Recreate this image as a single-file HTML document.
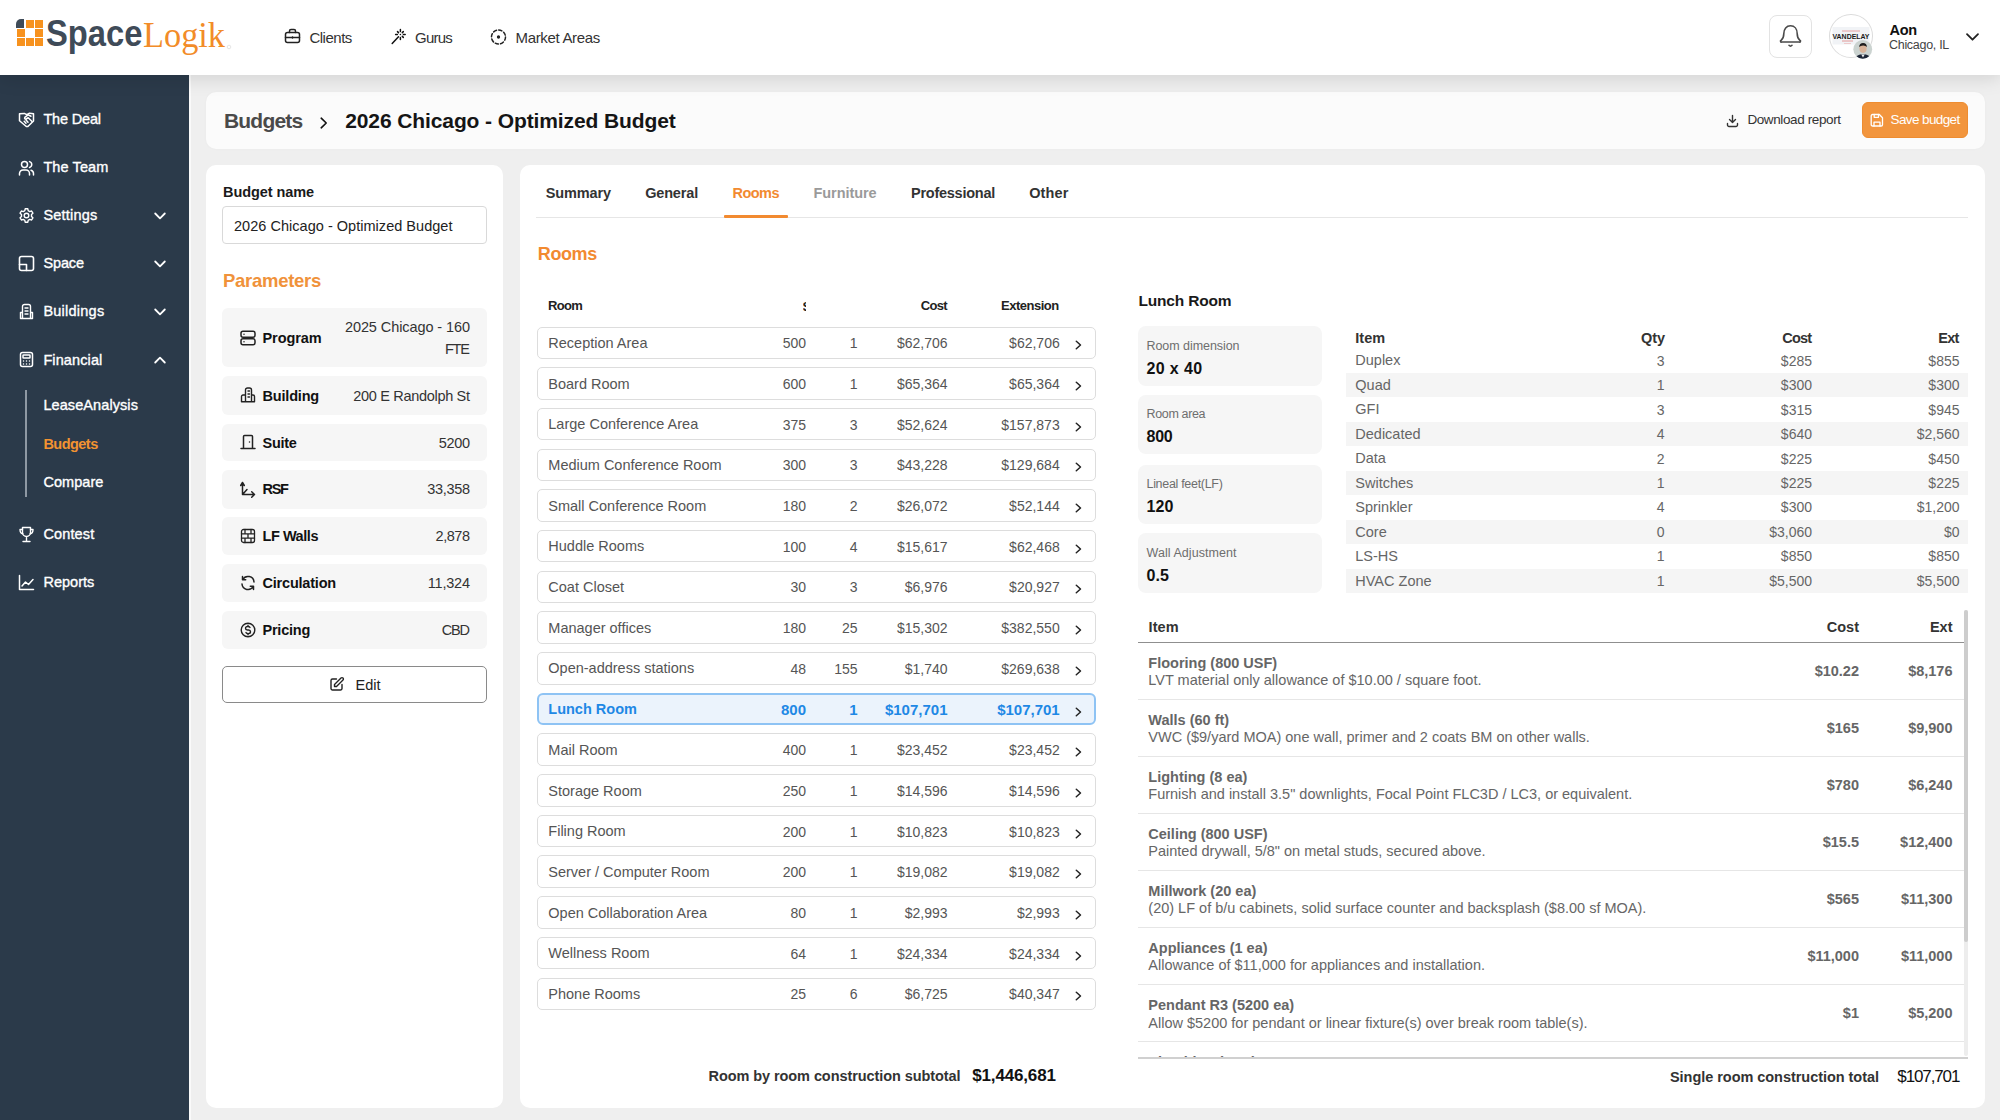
<!DOCTYPE html>
<html><head><meta charset="utf-8"><title>SpaceLogik - Budgets</title>
<style>
html,body{margin:0;padding:0;}
body{width:2000px;height:1120px;overflow:hidden;background:#EFEFEF;position:relative;font-family:"Liberation Sans",sans-serif;}
.t{position:absolute;white-space:nowrap;line-height:1;}
.b{position:absolute;box-sizing:border-box;}
svg.b{overflow:visible;}
</style></head><body>
<div class="b" style="left:0px;top:75px;width:189px;height:1045px;background:#2B3A4A;"></div>
<div class="b" style="left:189px;top:75px;width:2px;height:1045px;background:#fafafa;"></div>
<div class="b" style="left:206px;top:92px;width:1779px;height:57px;background:#fbfbfb;border-radius:10px;box-shadow:0 0 3px rgba(0,0,0,0.03);"></div>
<div class="b" style="left:206px;top:165px;width:297px;height:943px;background:#fff;border-radius:10px;"></div>
<div class="b" style="left:520px;top:165px;width:1465px;height:943px;background:#fff;border-radius:10px;"></div>
<div class="b" style="left:0px;top:0px;width:2000px;height:75px;background:#fff;box-shadow:0 3px 18px rgba(0,0,0,0.13);"></div>
<div class="b" style="left:26.1px;top:20px;width:8.100000000000001px;height:8.100000000000001px;background:#F7921E;"></div>
<div class="b" style="left:35.3px;top:20px;width:8.100000000000001px;height:8.100000000000001px;background:#F7921E;"></div>
<div class="b" style="left:16.9px;top:29.2px;width:8.100000000000001px;height:8.099999999999998px;background:#F7921E;"></div>
<div class="b" style="left:35.3px;top:29.2px;width:8.100000000000001px;height:8.099999999999998px;background:#F7921E;"></div>
<div class="b" style="left:16.9px;top:38.4px;width:8.100000000000001px;height:8.100000000000001px;background:#F7921E;"></div>
<div class="b" style="left:26.1px;top:38.4px;width:8.100000000000001px;height:8.100000000000001px;background:#F7921E;"></div>
<div class="b" style="left:35.3px;top:38.4px;width:8.100000000000001px;height:8.100000000000001px;background:#F7921E;"></div>
<div class="b" style="left:16.2px;top:19.3px;width:8.2px;height:8.599999999999998px;background:#3F4B58;border-top-left-radius:5px;"></div>
<svg class="b" style="left:0;top:0" width="260" height="75"><text x="46" y="46" font-family="Liberation Sans" font-weight="700" font-size="37" fill="#3F4B58" textLength="96.5" lengthAdjust="spacingAndGlyphs">Space</text><text x="143" y="46.8" font-family="Liberation Serif" font-size="35" fill="#F28C28" textLength="82" lengthAdjust="spacingAndGlyphs">Logik</text><circle cx="229" cy="47" r="1.8" stroke="#ccc" stroke-width="0.5" fill="none"/></svg>
<div class="t" style="top:29.80px;font-size:15px;font-weight:400;color:#333;letter-spacing:-0.479px;left:309.40px;">Clients</div>
<div class="t" style="top:29.80px;font-size:15px;font-weight:400;color:#333;letter-spacing:-0.769px;left:415.00px;">Gurus</div>
<div class="t" style="top:29.80px;font-size:15px;font-weight:400;color:#333;letter-spacing:-0.322px;left:515.50px;">Market Areas</div>
<svg class="b" style="left:284px;top:28px" width="17" height="16" viewBox="0 0 17 16" fill="none" stroke="#222" stroke-width="1.5" stroke-linecap="round" stroke-linejoin="round"><rect x="1.5" y="4.5" width="14" height="10" rx="2"/><path d="M5.5 4.5V3a1.5 1.5 0 0 1 1.5-1.5h3A1.5 1.5 0 0 1 11.5 3v1.5"/><path d="M1.5 9.5h14"/><path d="M8.5 9v1"/></svg>
<svg class="b" style="left:390px;top:28px" width="17" height="17" viewBox="0 0 17 17" fill="none" stroke="#111" stroke-width="1.5" stroke-linecap="round" stroke-linejoin="round"><path d="M2.2 15.5l6.3-6.8M10.4 1.6v1.8M10.4 9.6v1.8M5.6 6.5h1.8M13.4 6.5h1.8M7.5 3.6l1 1M13.3 3.6l-1 1M12.3 8.4l1 1M10.4 6.5h.01"/></svg>
<svg class="b" style="left:490px;top:29px" width="17" height="16" viewBox="0 0 17 16" fill="none" stroke="#222" stroke-width="1.5" stroke-linecap="round" stroke-linejoin="round"><circle cx="8.5" cy="8" r="7" stroke-dasharray="3.3 2.2"/><circle cx="8.5" cy="8" r="0.9" fill="#222"/></svg>
<div class="b" style="left:1769px;top:15px;width:43px;height:43px;border:1px solid #E3E3E3;border-radius:8px;background:#fff;"></div>
<svg class="b" style="left:1779px;top:24px" width="23" height="25" viewBox="0 0 23 25" fill="none" stroke="#4a4a4a" stroke-width="1.6" stroke-linecap="round" stroke-linejoin="round"><path d="M4.8 9.8C4.8 5 7.5 1.8 11.5 1.8S18.2 5 18.2 9.8c0 3 1.2 5.3 2.7 6.5a.9.9 0 0 1-.6 1.7H2.7a.9.9 0 0 1-.6-1.7C3.6 15.1 4.8 12.8 4.8 9.8z"/><path d="M10 21.3q1.5 1.6 3 0"/></svg>
<div class="b" style="left:1829px;top:14.3px;width:43.5px;height:43.7px;border:1px solid #DCDCDC;border-radius:50%;background:#fff;"></div>
<svg class="b" style="left:1829px;top:14.3px" width="44" height="44"><rect x="3.5" y="13" width="37" height="17.5" fill="#F1F3F6"/><line x1="13" y1="17" x2="31" y2="17" stroke="#E08080" stroke-width="0.7"/><text x="22" y="24.7" font-family="Liberation Sans" font-weight="700" font-size="6.4" fill="#1a1a1a" text-anchor="middle" textLength="37" lengthAdjust="spacingAndGlyphs">VANDELAY</text><line x1="13" y1="27" x2="24" y2="27" stroke="#E08080" stroke-width="0.8"/><line x1="15" y1="29.5" x2="22" y2="29.5" stroke="#E8A0A0" stroke-width="0.5"/></svg>
<svg class="b" style="left:1852.5px;top:39.5px" width="19.5" height="19"><defs><clipPath id="pc"><circle cx="9.75" cy="9.3" r="9.4"/></clipPath></defs><g clip-path="url(#pc)"><rect width="20" height="20" fill="#CBD3D0"/><ellipse cx="10" cy="8.5" rx="3.6" ry="4.4" fill="#D9B49A"/><path d="M6.2 7.2c0-3 1.6-4.3 3.9-4.3s3.8 1.3 3.8 4.1c-.9-.9-2-1.4-3.8-1.5-1.7.1-3 .8-3.9 1.7z" fill="#1E1E1E"/><path d="M1.5 20c.8-4 3.8-5.8 8.5-5.8s7.7 1.8 8.5 5.8z" fill="#1C2536"/><path d="M8.3 14.4l1.7 3 1.7-3z" fill="#F2F2F2"/></g></svg>
<div class="t" style="top:23.12px;font-size:14.5px;font-weight:700;color:#111;letter-spacing:-0.195px;left:1889.40px;">Aon</div>
<div class="t" style="top:39.42px;font-size:12.5px;font-weight:400;color:#444;letter-spacing:-0.294px;left:1889.00px;">Chicago, IL</div>
<svg class="b" style="left:1966px;top:33px" width="13" height="8" viewBox="0 0 13 8" fill="none" stroke="#222" stroke-width="1.8" stroke-linecap="round" stroke-linejoin="round"><path d="M1 1.2l5.5 5.5 5.5-5.5"/></svg>
<div class="t" style="top:112.02px;font-size:14.5px;font-weight:400;color:#FFFFFF;letter-spacing:-0.167px;left:43.40px;-webkit-text-stroke:0.35px #fff;">The Deal</div>
<div class="t" style="top:160.22px;font-size:14.5px;font-weight:400;color:#FFFFFF;letter-spacing:0.099px;left:43.40px;-webkit-text-stroke:0.35px #fff;">The Team</div>
<div class="t" style="top:208.42px;font-size:14.5px;font-weight:400;color:#FFFFFF;letter-spacing:0.201px;left:43.40px;-webkit-text-stroke:0.35px #fff;">Settings</div>
<div class="t" style="top:256.32px;font-size:14.5px;font-weight:400;color:#FFFFFF;letter-spacing:-0.123px;left:43.40px;-webkit-text-stroke:0.35px #fff;">Space</div>
<div class="t" style="top:304.32px;font-size:14.5px;font-weight:400;color:#FFFFFF;letter-spacing:0.240px;left:43.40px;-webkit-text-stroke:0.35px #fff;">Buildings</div>
<div class="t" style="top:352.72px;font-size:14.5px;font-weight:400;color:#FFFFFF;letter-spacing:0.108px;left:43.40px;-webkit-text-stroke:0.35px #fff;">Financial</div>
<div class="t" style="top:527.12px;font-size:14.5px;font-weight:400;color:#FFFFFF;letter-spacing:0.147px;left:43.40px;-webkit-text-stroke:0.35px #fff;">Contest</div>
<div class="t" style="top:574.72px;font-size:14.5px;font-weight:400;color:#FFFFFF;letter-spacing:0.033px;left:43.40px;-webkit-text-stroke:0.35px #fff;">Reports</div>
<div class="t" style="top:398.32px;font-size:14.5px;font-weight:400;color:#FFFFFF;letter-spacing:0.085px;left:43.40px;-webkit-text-stroke:0.35px #fff;">LeaseAnalysis</div>
<div class="t" style="top:475.42px;font-size:14.5px;font-weight:400;color:#FFFFFF;letter-spacing:0.052px;left:43.40px;-webkit-text-stroke:0.35px #fff;">Compare</div>
<div class="t" style="top:436.72px;font-size:14.5px;font-weight:700;color:#F39331;letter-spacing:-0.529px;left:43.40px;">Budgets</div>
<div class="b" style="left:25px;top:390px;width:2px;height:107px;background:#8E98A3;"></div>
<svg class="b" style="left:154px;top:211.7px" width="12" height="8" viewBox="0 0 12 8" fill="none" stroke="#fff" stroke-width="1.8" stroke-linecap="round" stroke-linejoin="round"><path d="M1.2 1.5l4.8 4.8 4.8-4.8"/></svg>
<svg class="b" style="left:154px;top:259.6px" width="12" height="8" viewBox="0 0 12 8" fill="none" stroke="#fff" stroke-width="1.8" stroke-linecap="round" stroke-linejoin="round"><path d="M1.2 1.5l4.8 4.8 4.8-4.8"/></svg>
<svg class="b" style="left:154px;top:307.6px" width="12" height="8" viewBox="0 0 12 8" fill="none" stroke="#fff" stroke-width="1.8" stroke-linecap="round" stroke-linejoin="round"><path d="M1.2 1.5l4.8 4.8 4.8-4.8"/></svg>
<svg class="b" style="left:154px;top:356px" width="12" height="8" viewBox="0 0 12 8" fill="none" stroke="#fff" stroke-width="1.8" stroke-linecap="round" stroke-linejoin="round"><path d="M1.2 6.5l4.8-4.8 4.8 4.8"/></svg>
<svg class="b" style="left:18px;top:111px" width="17" height="17" viewBox="0 0 17 17" fill="none" stroke="#fff" stroke-width="1.5" stroke-linecap="round" stroke-linejoin="round"><path d="M1.5 2.7l4.8-.3 2.4 1.2 2.8-1.4 4 .5v7.3l-5.6 5.5H8.3L1.5 9.7z"/><path d="M13 5.2l-3-1.4-3.2 2.6a1.1 1.1 0 0 0 1.4 1.6l2-1.3 3.6 3.6M6.2 10.2l1.8 2M8 9l2 2.2"/></svg>
<svg class="b" style="left:18px;top:160px" width="17" height="16" viewBox="0 0 17 16" fill="none" stroke="#fff" stroke-width="1.5" stroke-linecap="round" stroke-linejoin="round"><circle cx="6.5" cy="4.5" r="3"/><path d="M1.5 15v-1.5a3.5 3.5 0 0 1 3.5-3.5h3a3.5 3.5 0 0 1 3.5 3.5V15"/><path d="M11.5 1.6a3 3 0 0 1 0 5.8M15.5 15v-1.5a3.5 3.5 0 0 0-2.5-3.3"/></svg>
<svg class="b" style="left:18px;top:207px" width="17" height="17" viewBox="0 0 17 17" fill="none" stroke="#fff" stroke-width="1.4" stroke-linecap="round" stroke-linejoin="round"><circle cx="8.5" cy="8.5" r="2.3"/><path d="M7.2 1.8h2.6l.4 1.9 1.5.9 1.9-.6 1.3 2.2-1.4 1.4v1.8l1.4 1.4-1.3 2.2-1.9-.6-1.5.9-.4 1.9H7.2l-.4-1.9-1.5-.9-1.9.6-1.3-2.2L3.5 9.4V7.6L2.1 6.2l1.3-2.2 1.9.6 1.5-.9z"/></svg>
<svg class="b" style="left:18px;top:255px" width="17" height="17" viewBox="0 0 17 17" fill="none" stroke="#fff" stroke-width="1.6" stroke-linecap="round" stroke-linejoin="round"><rect x="1.5" y="1.5" width="14" height="14" rx="2"/><path d="M1.5 9.5h7v6"/></svg>
<svg class="b" style="left:18px;top:303px" width="17" height="17" viewBox="0 0 17 17" fill="none" stroke="#fff" stroke-width="1.4" stroke-linecap="round" stroke-linejoin="round"><path d="M2.5 15.5h12M4.5 15.5V3.5a2 2 0 0 1 2-2h4a2 2 0 0 1 2 2v12M2.5 15.5v-6h2M14.5 15.5v-6h-2M7 5h3M7 8h3M7 11h3"/></svg>
<svg class="b" style="left:19px;top:351px" width="15" height="17" viewBox="0 0 15 17" fill="none" stroke="#fff" stroke-width="1.5" stroke-linecap="round" stroke-linejoin="round"><rect x="1.5" y="1.5" width="12" height="14" rx="2"/><rect x="4" y="4" width="7" height="3" rx=".5"/><path d="M4.5 10h.01M7.5 10h.01M10.5 10h.01M4.5 13h.01M7.5 13h.01M10.5 13h.01"/></svg>
<svg class="b" style="left:18px;top:526px" width="17" height="17" viewBox="0 0 17 17" fill="none" stroke="#fff" stroke-width="1.4" stroke-linecap="round" stroke-linejoin="round"><path d="M5 15.5h7M8.5 11.5v4M4.5 1.5h8v5a4 4 0 0 1-8 0z"/><path d="M4.5 3.5h-2.5c0 2.5 1 4 2.8 4.2M12.5 3.5h2.5c0 2.5-1 4-2.8 4.2"/></svg>
<svg class="b" style="left:18px;top:574px" width="17" height="17" viewBox="0 0 17 17" fill="none" stroke="#fff" stroke-width="1.5" stroke-linecap="round" stroke-linejoin="round"><path d="M1.5 1.5v14h14"/><path d="M4 12l3.5-4 3 2.5 4.5-5"/></svg>
<div class="t" style="top:110.12px;font-size:21px;font-weight:700;color:#4A4A4A;letter-spacing:-0.814px;left:224.00px;">Budgets</div>
<svg class="b" style="left:320px;top:117px" width="8" height="12" viewBox="0 0 8 12" fill="none" stroke="#111" stroke-width="1.6" stroke-linecap="round" stroke-linejoin="round"><path d="M1.2 1.2l5 4.8-5 4.8"/></svg>
<div class="t" style="top:110.12px;font-size:21px;font-weight:700;color:#151515;letter-spacing:-0.104px;left:345.20px;">2026 Chicago - Optimized Budget</div>
<svg class="b" style="left:1726px;top:114px" width="13" height="13" viewBox="0 0 13 13" fill="none" stroke="#333" stroke-width="1.4" stroke-linecap="round" stroke-linejoin="round"><path d="M6.5 1.5v7M3.5 5.5l3 3 3-3M1.5 9.5v1.5a1.5 1.5 0 0 0 1.5 1.5h7a1.5 1.5 0 0 0 1.5-1.5V9.5"/></svg>
<div class="t" style="top:112.97px;font-size:13.5px;font-weight:400;color:#333;letter-spacing:-0.390px;left:1747.40px;">Download report</div>
<div class="b" style="left:1862px;top:102px;width:106px;height:36px;background:#F2953D;border-radius:6px;border:1px solid #EE8C30;"></div>
<svg class="b" style="left:1870px;top:112.5px" width="14" height="14" viewBox="0 0 14 14" fill="none" stroke="#fff" stroke-width="1.3" stroke-linecap="round" stroke-linejoin="round"><path d="M2.5 1.5h6.8l3.2 3.2v7a1.3 1.3 0 0 1-1.3 1.3H2.5a1.3 1.3 0 0 1-1.3-1.3V2.8a1.3 1.3 0 0 1 1.3-1.3z"/><path d="M4 13v-3.8h6V13M4.2 1.5v2.8h4.3V1.5"/></svg>
<div class="t" style="top:112.97px;font-size:13.5px;font-weight:400;color:#fff;letter-spacing:-0.619px;left:1890.60px;">Save budget</div>
<div class="t" style="top:184.72px;font-size:14.5px;font-weight:700;color:#1a1a1a;letter-spacing:-0.077px;left:223.00px;">Budget name</div>
<div class="b" style="left:222px;top:206px;width:264.5px;height:37.5px;border:1px solid #D9D9D9;border-radius:4px;background:#fff;"></div>
<div class="t" style="top:219.22px;font-size:14.5px;font-weight:400;color:#222;letter-spacing:0.028px;left:234.00px;">2026 Chicago - Optimized Budget</div>
<div class="t" style="top:272.34px;font-size:18.5px;font-weight:700;color:#F0923A;letter-spacing:-0.279px;left:223.00px;">Parameters</div>
<div class="b" style="left:222px;top:307.5px;width:264.5px;height:59.30000000000001px;background:#F6F6F6;border-radius:6px;"></div>
<div class="t" style="top:331.42px;font-size:14.5px;font-weight:700;color:#111;letter-spacing:-0.090px;left:262.50px;">Program</div>
<div class="b" style="left:222px;top:376.3px;width:264.5px;height:38.30000000000001px;background:#F6F6F6;border-radius:6px;"></div>
<div class="t" style="top:388.62px;font-size:14.5px;font-weight:700;color:#111;letter-spacing:-0.186px;left:262.50px;">Building</div>
<div class="t" style="top:388.62px;font-size:14.5px;font-weight:400;color:#333;letter-spacing:-0.308px;right:1530.31px;">200 E Randolph St</div>
<div class="b" style="left:222px;top:423.7px;width:264.5px;height:37.5px;background:#F6F6F6;border-radius:6px;"></div>
<div class="t" style="top:435.72px;font-size:14.5px;font-weight:700;color:#111;letter-spacing:-0.290px;left:262.50px;">Suite</div>
<div class="t" style="top:435.72px;font-size:14.5px;font-weight:400;color:#333;letter-spacing:-0.314px;right:1530.31px;">5200</div>
<div class="b" style="left:222px;top:470px;width:264.5px;height:38.5px;background:#F6F6F6;border-radius:6px;"></div>
<div class="t" style="top:482.22px;font-size:14.5px;font-weight:700;color:#111;letter-spacing:-1.333px;left:262.50px;">RSF</div>
<div class="t" style="top:482.22px;font-size:14.5px;font-weight:400;color:#333;letter-spacing:-0.308px;right:1530.31px;">33,358</div>
<div class="b" style="left:222px;top:517px;width:264.5px;height:38px;background:#F6F6F6;border-radius:6px;"></div>
<div class="t" style="top:529.22px;font-size:14.5px;font-weight:700;color:#111;letter-spacing:-0.447px;left:262.50px;">LF Walls</div>
<div class="t" style="top:529.22px;font-size:14.5px;font-weight:400;color:#333;letter-spacing:-0.457px;right:1530.46px;">2,878</div>
<div class="b" style="left:222px;top:564px;width:264.5px;height:38px;background:#F6F6F6;border-radius:6px;"></div>
<div class="t" style="top:576.22px;font-size:14.5px;font-weight:700;color:#111;letter-spacing:-0.203px;left:262.50px;">Circulation</div>
<div class="t" style="top:576.22px;font-size:14.5px;font-weight:400;color:#333;letter-spacing:-0.212px;right:1530.21px;">11,324</div>
<div class="b" style="left:222px;top:611px;width:264.5px;height:38px;background:#F6F6F6;border-radius:6px;"></div>
<div class="t" style="top:623.22px;font-size:14.5px;font-weight:700;color:#111;letter-spacing:-0.236px;left:262.50px;">Pricing</div>
<div class="t" style="top:623.22px;font-size:14.5px;font-weight:400;color:#333;letter-spacing:-1.205px;right:1531.20px;">CBD</div>
<div class="t" style="top:319.92px;font-size:14.5px;font-weight:400;color:#333;letter-spacing:-0.087px;right:1530.09px;">2025 Chicago - 160</div>
<div class="t" style="top:342.02px;font-size:14.5px;font-weight:400;color:#333;letter-spacing:-1.129px;right:1531.13px;">FTE</div>
<svg class="b" style="left:240px;top:330px" width="16" height="16" viewBox="0 0 16 16" fill="none" stroke="#222" stroke-width="1.5" stroke-linecap="round" stroke-linejoin="round"><rect x="1" y="1.2" width="14" height="6" rx="2"/><rect x="1" y="8.8" width="14" height="6" rx="2"/><path d="M4 4.2h.01M4 11.8h.01"/></svg>
<svg class="b" style="left:240px;top:387px" width="16" height="16" viewBox="0 0 16 16" fill="none" stroke="#222" stroke-width="1.4" stroke-linecap="round" stroke-linejoin="round"><path d="M5.5 14.8V3a2 2 0 0 1 2-2h2a2 2 0 0 1 2 2v11.8M1.5 14.8h13M1.5 14.8V9.5a1.5 1.5 0 0 1 1.5-1.5h2.5M14.5 14.8V9.5A1.5 1.5 0 0 0 13 8h-1.5M8 4h1.5M8 7h1.5M8 10h1.5"/></svg>
<svg class="b" style="left:240px;top:434px" width="16" height="16" viewBox="0 0 16 16" fill="none" stroke="#222" stroke-width="1.5" stroke-linecap="round" stroke-linejoin="round"><path d="M1 14.5h14M3.5 14.5V2.5a1 1 0 0 1 1-1h7a1 1 0 0 1 1 1v12M9.5 8h.01"/></svg>
<svg class="b" style="left:240px;top:481px" width="17" height="17" viewBox="0 0 17 17" fill="none" stroke="#222" stroke-width="1.5" stroke-linecap="round" stroke-linejoin="round"><path d="M2.5 13.5V1.5M0.7 4.5l1.8-3 1.8 3M2.5 13.5h12M11.7 10.8l2.8 2.7-2.8 2.7M3.2 12.8l3.8-4.2"/></svg>
<svg class="b" style="left:240px;top:528px" width="16" height="16" viewBox="0 0 16 16" fill="none" stroke="#222" stroke-width="1.3" stroke-linecap="round" stroke-linejoin="round"><rect x="1.5" y="1.5" width="13" height="13" rx="2"/><path d="M1.5 5.8h13M1.5 10.2h13M5 1.5v4.3M11 1.5v4.3M8 5.8v4.4M5 10.2v4.3M11 10.2v4.3"/></svg>
<svg class="b" style="left:240px;top:575px" width="16" height="16" viewBox="0 0 16 16" fill="none" stroke="#222" stroke-width="1.5" stroke-linecap="round" stroke-linejoin="round"><path d="M14 7A6 6 0 0 0 2.8 4.5M2.5 1.5v3.2h3.2M2 9a6 6 0 0 0 11.2 2.5M13.5 14.5v-3.2h-3.2"/></svg>
<svg class="b" style="left:240px;top:622px" width="16" height="16" viewBox="0 0 16 16" fill="none" stroke="#222" stroke-width="1.4" stroke-linecap="round" stroke-linejoin="round"><circle cx="8" cy="8" r="6.8"/><path d="M10 5.5c-.4-.7-1.1-1-2-1h-.6c-1 0-1.9.8-1.9 1.8s.8 1.6 1.9 1.7h1.2c1 .1 1.9.8 1.9 1.8s-.9 1.8-1.9 1.8h-.6c-.9 0-1.6-.4-2-1M8 3.2v1.3M8 11.5v1.3"/></svg>
<div class="b" style="left:222px;top:666px;width:264.5px;height:36.5px;border:1px solid #8A8A8A;border-radius:5px;background:#fff;"></div>
<svg class="b" style="left:329px;top:676px" width="16" height="16" viewBox="0 0 16 16" fill="none" stroke="#222" stroke-width="1.4" stroke-linecap="round" stroke-linejoin="round"><path d="M7.5 3H3.5A1.5 1.5 0 0 0 2 4.5v8A1.5 1.5 0 0 0 3.5 14h8a1.5 1.5 0 0 0 1.5-1.5V8.5"/><path d="M5.5 10.5h2l6.5-6.5a1.4 1.4 0 0 0-2-2L5.5 8.5z"/></svg>
<div class="t" style="top:677.72px;font-size:14.5px;font-weight:400;color:#222;letter-spacing:0.004px;left:355.50px;">Edit</div>
<div class="t" style="top:185.72px;font-size:14.5px;font-weight:700;color:#333;letter-spacing:-0.112px;left:545.70px;">Summary</div>
<div class="t" style="top:185.72px;font-size:14.5px;font-weight:700;color:#333;letter-spacing:-0.171px;left:645.20px;">General</div>
<div class="t" style="top:185.72px;font-size:14.5px;font-weight:700;color:#F28A30;letter-spacing:-0.529px;left:732.50px;">Rooms</div>
<div class="t" style="top:185.72px;font-size:14.5px;font-weight:700;color:#9A9A9A;letter-spacing:-0.071px;left:813.50px;">Furniture</div>
<div class="t" style="top:185.72px;font-size:14.5px;font-weight:700;color:#333;letter-spacing:-0.252px;left:911.00px;">Professional</div>
<div class="t" style="top:185.72px;font-size:14.5px;font-weight:700;color:#333;letter-spacing:0.126px;left:1029.20px;">Other</div>
<div class="b" style="left:536px;top:216.5px;width:1432px;height:1.5px;background:#E6E6E6;"></div>
<div class="b" style="left:723.8px;top:214.5px;width:64.20000000000005px;height:3.0px;background:#F28A30;border-radius:1px;"></div>
<div class="t" style="top:245.46px;font-size:18px;font-weight:700;color:#F28A30;letter-spacing:-0.401px;left:537.80px;">Rooms</div>
<div class="t" style="top:298.79px;font-size:13px;font-weight:700;color:#222;letter-spacing:-0.707px;left:548.00px;">Room</div>
<div class="b" style="left:802.5px;top:295px;width:3.6px;height:20px;overflow:hidden"><div class="t" style="left:0;top:4.5px;font-size:13px;font-weight:700;color:#222">S</div></div>
<div class="t" style="top:298.79px;font-size:13px;font-weight:700;color:#222;letter-spacing:-0.747px;right:1053.25px;">Cost</div>
<div class="t" style="top:298.79px;font-size:13px;font-weight:700;color:#222;letter-spacing:-0.492px;right:941.29px;">Extension</div>
<div class="b" style="left:536.5px;top:326.5px;width:559.5px;height:32.5px;border:1px solid #DDDDDD;border-radius:5px;background:#fff;"></div>
<div class="t" style="top:335.92px;font-size:14.5px;font-weight:400;color:#555;left:548.30px;">Reception Area</div>
<div class="t" style="top:336.35px;font-size:14px;font-weight:400;color:#555;right:1194.00px;">500</div>
<div class="t" style="top:336.35px;font-size:14px;font-weight:400;color:#555;right:1142.50px;">1</div>
<div class="t" style="top:336.35px;font-size:14px;font-weight:400;color:#555;right:1052.50px;">$62,706</div>
<div class="t" style="top:336.35px;font-size:14px;font-weight:400;color:#555;right:940.30px;">$62,706</div>
<svg class="b" style="left:1075px;top:340.3px" width="8" height="10" viewBox="0 0 8 10" fill="none" stroke="#222" stroke-width="1.5" stroke-linecap="round" stroke-linejoin="round"><path d="M1.3 1.2l4.2 3.8-4.2 3.8"/></svg>
<div class="b" style="left:536.5px;top:367.19px;width:559.5px;height:32.5px;border:1px solid #DDDDDD;border-radius:5px;background:#fff;"></div>
<div class="t" style="top:376.61px;font-size:14.5px;font-weight:400;color:#555;left:548.30px;">Board Room</div>
<div class="t" style="top:377.04px;font-size:14px;font-weight:400;color:#555;right:1194.00px;">600</div>
<div class="t" style="top:377.04px;font-size:14px;font-weight:400;color:#555;right:1142.50px;">1</div>
<div class="t" style="top:377.04px;font-size:14px;font-weight:400;color:#555;right:1052.50px;">$65,364</div>
<div class="t" style="top:377.04px;font-size:14px;font-weight:400;color:#555;right:940.30px;">$65,364</div>
<svg class="b" style="left:1075px;top:380.99px" width="8" height="10" viewBox="0 0 8 10" fill="none" stroke="#222" stroke-width="1.5" stroke-linecap="round" stroke-linejoin="round"><path d="M1.3 1.2l4.2 3.8-4.2 3.8"/></svg>
<div class="b" style="left:536.5px;top:407.88px;width:559.5px;height:32.5px;border:1px solid #DDDDDD;border-radius:5px;background:#fff;"></div>
<div class="t" style="top:417.30px;font-size:14.5px;font-weight:400;color:#555;left:548.30px;">Large Conference Area</div>
<div class="t" style="top:417.73px;font-size:14px;font-weight:400;color:#555;right:1194.00px;">375</div>
<div class="t" style="top:417.73px;font-size:14px;font-weight:400;color:#555;right:1142.50px;">3</div>
<div class="t" style="top:417.73px;font-size:14px;font-weight:400;color:#555;right:1052.50px;">$52,624</div>
<div class="t" style="top:417.73px;font-size:14px;font-weight:400;color:#555;right:940.30px;">$157,873</div>
<svg class="b" style="left:1075px;top:421.68px" width="8" height="10" viewBox="0 0 8 10" fill="none" stroke="#222" stroke-width="1.5" stroke-linecap="round" stroke-linejoin="round"><path d="M1.3 1.2l4.2 3.8-4.2 3.8"/></svg>
<div class="b" style="left:536.5px;top:448.57px;width:559.5px;height:32.5px;border:1px solid #DDDDDD;border-radius:5px;background:#fff;"></div>
<div class="t" style="top:457.99px;font-size:14.5px;font-weight:400;color:#555;left:548.30px;">Medium Conference Room</div>
<div class="t" style="top:458.42px;font-size:14px;font-weight:400;color:#555;right:1194.00px;">300</div>
<div class="t" style="top:458.42px;font-size:14px;font-weight:400;color:#555;right:1142.50px;">3</div>
<div class="t" style="top:458.42px;font-size:14px;font-weight:400;color:#555;right:1052.50px;">$43,228</div>
<div class="t" style="top:458.42px;font-size:14px;font-weight:400;color:#555;right:940.30px;">$129,684</div>
<svg class="b" style="left:1075px;top:462.37px" width="8" height="10" viewBox="0 0 8 10" fill="none" stroke="#222" stroke-width="1.5" stroke-linecap="round" stroke-linejoin="round"><path d="M1.3 1.2l4.2 3.8-4.2 3.8"/></svg>
<div class="b" style="left:536.5px;top:489.26px;width:559.5px;height:32.5px;border:1px solid #DDDDDD;border-radius:5px;background:#fff;"></div>
<div class="t" style="top:498.68px;font-size:14.5px;font-weight:400;color:#555;left:548.30px;">Small Conference Room</div>
<div class="t" style="top:499.11px;font-size:14px;font-weight:400;color:#555;right:1194.00px;">180</div>
<div class="t" style="top:499.11px;font-size:14px;font-weight:400;color:#555;right:1142.50px;">2</div>
<div class="t" style="top:499.11px;font-size:14px;font-weight:400;color:#555;right:1052.50px;">$26,072</div>
<div class="t" style="top:499.11px;font-size:14px;font-weight:400;color:#555;right:940.30px;">$52,144</div>
<svg class="b" style="left:1075px;top:503.06px" width="8" height="10" viewBox="0 0 8 10" fill="none" stroke="#222" stroke-width="1.5" stroke-linecap="round" stroke-linejoin="round"><path d="M1.3 1.2l4.2 3.8-4.2 3.8"/></svg>
<div class="b" style="left:536.5px;top:529.95px;width:559.5px;height:32.5px;border:1px solid #DDDDDD;border-radius:5px;background:#fff;"></div>
<div class="t" style="top:539.37px;font-size:14.5px;font-weight:400;color:#555;left:548.30px;">Huddle Rooms</div>
<div class="t" style="top:539.80px;font-size:14px;font-weight:400;color:#555;right:1194.00px;">100</div>
<div class="t" style="top:539.80px;font-size:14px;font-weight:400;color:#555;right:1142.50px;">4</div>
<div class="t" style="top:539.80px;font-size:14px;font-weight:400;color:#555;right:1052.50px;">$15,617</div>
<div class="t" style="top:539.80px;font-size:14px;font-weight:400;color:#555;right:940.30px;">$62,468</div>
<svg class="b" style="left:1075px;top:543.75px" width="8" height="10" viewBox="0 0 8 10" fill="none" stroke="#222" stroke-width="1.5" stroke-linecap="round" stroke-linejoin="round"><path d="M1.3 1.2l4.2 3.8-4.2 3.8"/></svg>
<div class="b" style="left:536.5px;top:570.64px;width:559.5px;height:32.5px;border:1px solid #DDDDDD;border-radius:5px;background:#fff;"></div>
<div class="t" style="top:580.06px;font-size:14.5px;font-weight:400;color:#555;left:548.30px;">Coat Closet</div>
<div class="t" style="top:580.49px;font-size:14px;font-weight:400;color:#555;right:1194.00px;">30</div>
<div class="t" style="top:580.49px;font-size:14px;font-weight:400;color:#555;right:1142.50px;">3</div>
<div class="t" style="top:580.49px;font-size:14px;font-weight:400;color:#555;right:1052.50px;">$6,976</div>
<div class="t" style="top:580.49px;font-size:14px;font-weight:400;color:#555;right:940.30px;">$20,927</div>
<svg class="b" style="left:1075px;top:584.4399999999999px" width="8" height="10" viewBox="0 0 8 10" fill="none" stroke="#222" stroke-width="1.5" stroke-linecap="round" stroke-linejoin="round"><path d="M1.3 1.2l4.2 3.8-4.2 3.8"/></svg>
<div class="b" style="left:536.5px;top:611.3299999999999px;width:559.5px;height:32.5px;border:1px solid #DDDDDD;border-radius:5px;background:#fff;"></div>
<div class="t" style="top:620.75px;font-size:14.5px;font-weight:400;color:#555;left:548.30px;">Manager offices</div>
<div class="t" style="top:621.18px;font-size:14px;font-weight:400;color:#555;right:1194.00px;">180</div>
<div class="t" style="top:621.18px;font-size:14px;font-weight:400;color:#555;right:1142.50px;">25</div>
<div class="t" style="top:621.18px;font-size:14px;font-weight:400;color:#555;right:1052.50px;">$15,302</div>
<div class="t" style="top:621.18px;font-size:14px;font-weight:400;color:#555;right:940.30px;">$382,550</div>
<svg class="b" style="left:1075px;top:625.1299999999999px" width="8" height="10" viewBox="0 0 8 10" fill="none" stroke="#222" stroke-width="1.5" stroke-linecap="round" stroke-linejoin="round"><path d="M1.3 1.2l4.2 3.8-4.2 3.8"/></svg>
<div class="b" style="left:536.5px;top:652.02px;width:559.5px;height:32.5px;border:1px solid #DDDDDD;border-radius:5px;background:#fff;"></div>
<div class="t" style="top:661.44px;font-size:14.5px;font-weight:400;color:#555;left:548.30px;">Open-address stations</div>
<div class="t" style="top:661.87px;font-size:14px;font-weight:400;color:#555;right:1194.00px;">48</div>
<div class="t" style="top:661.87px;font-size:14px;font-weight:400;color:#555;right:1142.50px;">155</div>
<div class="t" style="top:661.87px;font-size:14px;font-weight:400;color:#555;right:1052.50px;">$1,740</div>
<div class="t" style="top:661.87px;font-size:14px;font-weight:400;color:#555;right:940.30px;">$269,638</div>
<svg class="b" style="left:1075px;top:665.8199999999999px" width="8" height="10" viewBox="0 0 8 10" fill="none" stroke="#222" stroke-width="1.5" stroke-linecap="round" stroke-linejoin="round"><path d="M1.3 1.2l4.2 3.8-4.2 3.8"/></svg>
<div class="b" style="left:536.5px;top:692.71px;width:559.5px;height:32.5px;border:2px solid #8EC3F4;border-radius:6px;background:#EBF3FC;"></div>
<div class="t" style="top:702.13px;font-size:14.5px;font-weight:700;color:#1E88E5;left:548.30px;">Lunch Room</div>
<div class="t" style="top:701.71px;font-size:15px;font-weight:700;color:#1E88E5;right:1194.00px;">800</div>
<div class="t" style="top:701.71px;font-size:15px;font-weight:700;color:#1E88E5;right:1142.50px;">1</div>
<div class="t" style="top:701.71px;font-size:15px;font-weight:700;color:#1E88E5;right:1052.50px;">$107,701</div>
<div class="t" style="top:701.71px;font-size:15px;font-weight:700;color:#1E88E5;right:940.30px;">$107,701</div>
<svg class="b" style="left:1075px;top:706.51px" width="8" height="10" viewBox="0 0 8 10" fill="none" stroke="#222" stroke-width="1.5" stroke-linecap="round" stroke-linejoin="round"><path d="M1.3 1.2l4.2 3.8-4.2 3.8"/></svg>
<div class="b" style="left:536.5px;top:733.4px;width:559.5px;height:32.5px;border:1px solid #DDDDDD;border-radius:5px;background:#fff;"></div>
<div class="t" style="top:742.82px;font-size:14.5px;font-weight:400;color:#555;left:548.30px;">Mail Room</div>
<div class="t" style="top:743.25px;font-size:14px;font-weight:400;color:#555;right:1194.00px;">400</div>
<div class="t" style="top:743.25px;font-size:14px;font-weight:400;color:#555;right:1142.50px;">1</div>
<div class="t" style="top:743.25px;font-size:14px;font-weight:400;color:#555;right:1052.50px;">$23,452</div>
<div class="t" style="top:743.25px;font-size:14px;font-weight:400;color:#555;right:940.30px;">$23,452</div>
<svg class="b" style="left:1075px;top:747.1999999999999px" width="8" height="10" viewBox="0 0 8 10" fill="none" stroke="#222" stroke-width="1.5" stroke-linecap="round" stroke-linejoin="round"><path d="M1.3 1.2l4.2 3.8-4.2 3.8"/></svg>
<div class="b" style="left:536.5px;top:774.0899999999999px;width:559.5px;height:32.5px;border:1px solid #DDDDDD;border-radius:5px;background:#fff;"></div>
<div class="t" style="top:783.51px;font-size:14.5px;font-weight:400;color:#555;left:548.30px;">Storage Room</div>
<div class="t" style="top:783.94px;font-size:14px;font-weight:400;color:#555;right:1194.00px;">250</div>
<div class="t" style="top:783.94px;font-size:14px;font-weight:400;color:#555;right:1142.50px;">1</div>
<div class="t" style="top:783.94px;font-size:14px;font-weight:400;color:#555;right:1052.50px;">$14,596</div>
<div class="t" style="top:783.94px;font-size:14px;font-weight:400;color:#555;right:940.30px;">$14,596</div>
<svg class="b" style="left:1075px;top:787.8899999999999px" width="8" height="10" viewBox="0 0 8 10" fill="none" stroke="#222" stroke-width="1.5" stroke-linecap="round" stroke-linejoin="round"><path d="M1.3 1.2l4.2 3.8-4.2 3.8"/></svg>
<div class="b" style="left:536.5px;top:814.78px;width:559.5px;height:32.5px;border:1px solid #DDDDDD;border-radius:5px;background:#fff;"></div>
<div class="t" style="top:824.20px;font-size:14.5px;font-weight:400;color:#555;left:548.30px;">Filing Room</div>
<div class="t" style="top:824.63px;font-size:14px;font-weight:400;color:#555;right:1194.00px;">200</div>
<div class="t" style="top:824.63px;font-size:14px;font-weight:400;color:#555;right:1142.50px;">1</div>
<div class="t" style="top:824.63px;font-size:14px;font-weight:400;color:#555;right:1052.50px;">$10,823</div>
<div class="t" style="top:824.63px;font-size:14px;font-weight:400;color:#555;right:940.30px;">$10,823</div>
<svg class="b" style="left:1075px;top:828.5799999999999px" width="8" height="10" viewBox="0 0 8 10" fill="none" stroke="#222" stroke-width="1.5" stroke-linecap="round" stroke-linejoin="round"><path d="M1.3 1.2l4.2 3.8-4.2 3.8"/></svg>
<div class="b" style="left:536.5px;top:855.47px;width:559.5px;height:32.5px;border:1px solid #DDDDDD;border-radius:5px;background:#fff;"></div>
<div class="t" style="top:864.89px;font-size:14.5px;font-weight:400;color:#555;left:548.30px;">Server / Computer Room</div>
<div class="t" style="top:865.32px;font-size:14px;font-weight:400;color:#555;right:1194.00px;">200</div>
<div class="t" style="top:865.32px;font-size:14px;font-weight:400;color:#555;right:1142.50px;">1</div>
<div class="t" style="top:865.32px;font-size:14px;font-weight:400;color:#555;right:1052.50px;">$19,082</div>
<div class="t" style="top:865.32px;font-size:14px;font-weight:400;color:#555;right:940.30px;">$19,082</div>
<svg class="b" style="left:1075px;top:869.27px" width="8" height="10" viewBox="0 0 8 10" fill="none" stroke="#222" stroke-width="1.5" stroke-linecap="round" stroke-linejoin="round"><path d="M1.3 1.2l4.2 3.8-4.2 3.8"/></svg>
<div class="b" style="left:536.5px;top:896.16px;width:559.5px;height:32.5px;border:1px solid #DDDDDD;border-radius:5px;background:#fff;"></div>
<div class="t" style="top:905.58px;font-size:14.5px;font-weight:400;color:#555;left:548.30px;">Open Collaboration Area</div>
<div class="t" style="top:906.01px;font-size:14px;font-weight:400;color:#555;right:1194.00px;">80</div>
<div class="t" style="top:906.01px;font-size:14px;font-weight:400;color:#555;right:1142.50px;">1</div>
<div class="t" style="top:906.01px;font-size:14px;font-weight:400;color:#555;right:1052.50px;">$2,993</div>
<div class="t" style="top:906.01px;font-size:14px;font-weight:400;color:#555;right:940.30px;">$2,993</div>
<svg class="b" style="left:1075px;top:909.9599999999999px" width="8" height="10" viewBox="0 0 8 10" fill="none" stroke="#222" stroke-width="1.5" stroke-linecap="round" stroke-linejoin="round"><path d="M1.3 1.2l4.2 3.8-4.2 3.8"/></svg>
<div class="b" style="left:536.5px;top:936.8499999999999px;width:559.5px;height:32.5px;border:1px solid #DDDDDD;border-radius:5px;background:#fff;"></div>
<div class="t" style="top:946.27px;font-size:14.5px;font-weight:400;color:#555;left:548.30px;">Wellness Room</div>
<div class="t" style="top:946.70px;font-size:14px;font-weight:400;color:#555;right:1194.00px;">64</div>
<div class="t" style="top:946.70px;font-size:14px;font-weight:400;color:#555;right:1142.50px;">1</div>
<div class="t" style="top:946.70px;font-size:14px;font-weight:400;color:#555;right:1052.50px;">$24,334</div>
<div class="t" style="top:946.70px;font-size:14px;font-weight:400;color:#555;right:940.30px;">$24,334</div>
<svg class="b" style="left:1075px;top:950.6499999999999px" width="8" height="10" viewBox="0 0 8 10" fill="none" stroke="#222" stroke-width="1.5" stroke-linecap="round" stroke-linejoin="round"><path d="M1.3 1.2l4.2 3.8-4.2 3.8"/></svg>
<div class="b" style="left:536.5px;top:977.54px;width:559.5px;height:32.5px;border:1px solid #DDDDDD;border-radius:5px;background:#fff;"></div>
<div class="t" style="top:986.96px;font-size:14.5px;font-weight:400;color:#555;left:548.30px;">Phone Rooms</div>
<div class="t" style="top:987.39px;font-size:14px;font-weight:400;color:#555;right:1194.00px;">25</div>
<div class="t" style="top:987.39px;font-size:14px;font-weight:400;color:#555;right:1142.50px;">6</div>
<div class="t" style="top:987.39px;font-size:14px;font-weight:400;color:#555;right:1052.50px;">$6,725</div>
<div class="t" style="top:987.39px;font-size:14px;font-weight:400;color:#555;right:940.30px;">$40,347</div>
<svg class="b" style="left:1075px;top:991.3399999999999px" width="8" height="10" viewBox="0 0 8 10" fill="none" stroke="#222" stroke-width="1.5" stroke-linecap="round" stroke-linejoin="round"><path d="M1.3 1.2l4.2 3.8-4.2 3.8"/></svg>
<div class="t" style="top:1069.22px;font-size:14.5px;font-weight:700;color:#333;letter-spacing:-0.075px;right:1039.48px;">Room by room construction subtotal</div>
<div class="t" style="top:1067.11px;font-size:17px;font-weight:700;color:#111;letter-spacing:-0.148px;left:972.20px;">$1,446,681</div>
<div class="t" style="top:293.38px;font-size:15.5px;font-weight:700;color:#1a1a1a;letter-spacing:-0.171px;left:1138.40px;">Lunch Room</div>
<div class="b" style="left:1138px;top:326.3px;width:183.5px;height:59.5px;background:#F6F6F6;border-radius:8px;"></div>
<div class="t" style="top:339.72px;font-size:12.5px;font-weight:400;color:#6E6E6E;letter-spacing:-0.057px;left:1146.50px;">Room dimension</div>
<div class="t" style="top:360.75px;font-size:16px;font-weight:700;color:#111;letter-spacing:0.374px;left:1146.50px;">20 x 40</div>
<div class="b" style="left:1138px;top:394.9px;width:183.5px;height:59.5px;background:#F6F6F6;border-radius:8px;"></div>
<div class="t" style="top:408.32px;font-size:12.5px;font-weight:400;color:#6E6E6E;letter-spacing:-0.348px;left:1146.50px;">Room area</div>
<div class="t" style="top:429.35px;font-size:16px;font-weight:700;color:#111;letter-spacing:-0.232px;left:1146.50px;">800</div>
<div class="b" style="left:1138px;top:464.5px;width:183.5px;height:59.5px;background:#F6F6F6;border-radius:8px;"></div>
<div class="t" style="top:477.92px;font-size:12.5px;font-weight:400;color:#6E6E6E;letter-spacing:-0.306px;left:1146.50px;">Lineal feet(LF)</div>
<div class="t" style="top:498.95px;font-size:16px;font-weight:700;color:#111;letter-spacing:0.102px;left:1146.50px;">120</div>
<div class="b" style="left:1138px;top:533.3px;width:183.5px;height:59.5px;background:#F6F6F6;border-radius:8px;"></div>
<div class="t" style="top:546.72px;font-size:12.5px;font-weight:400;color:#6E6E6E;letter-spacing:0.056px;left:1146.50px;">Wall Adjustment</div>
<div class="t" style="top:567.75px;font-size:16px;font-weight:700;color:#111;letter-spacing:0.086px;left:1146.50px;">0.5</div>
<div class="t" style="top:330.72px;font-size:14.5px;font-weight:700;color:#333;letter-spacing:0.046px;left:1355.30px;">Item</div>
<div class="t" style="top:330.72px;font-size:14.5px;font-weight:700;color:#333;letter-spacing:-0.124px;right:335.12px;">Qty</div>
<div class="t" style="top:330.72px;font-size:14.5px;font-weight:700;color:#333;letter-spacing:-0.730px;right:188.53px;">Cost</div>
<div class="t" style="top:330.72px;font-size:14.5px;font-weight:700;color:#333;letter-spacing:-0.755px;right:41.45px;">Ext</div>
<div class="t" style="top:353.12px;font-size:14.5px;font-weight:400;color:#666;left:1355.30px;">Duplex</div>
<div class="t" style="top:353.55px;font-size:14px;font-weight:400;color:#666;right:335.50px;">3</div>
<div class="t" style="top:353.55px;font-size:14px;font-weight:400;color:#666;right:188.00px;">$285</div>
<div class="t" style="top:353.55px;font-size:14px;font-weight:400;color:#666;right:40.50px;">$855</div>
<div class="b" style="left:1346.2px;top:372.59000000000003px;width:621.8px;height:24.30000000000001px;background:#F5F5F5;"></div>
<div class="t" style="top:377.61px;font-size:14.5px;font-weight:400;color:#666;left:1355.30px;">Quad</div>
<div class="t" style="top:378.04px;font-size:14px;font-weight:400;color:#666;right:335.50px;">1</div>
<div class="t" style="top:378.04px;font-size:14px;font-weight:400;color:#666;right:188.00px;">$300</div>
<div class="t" style="top:378.04px;font-size:14px;font-weight:400;color:#666;right:40.50px;">$300</div>
<div class="t" style="top:402.10px;font-size:14.5px;font-weight:400;color:#666;left:1355.30px;">GFI</div>
<div class="t" style="top:402.53px;font-size:14px;font-weight:400;color:#666;right:335.50px;">3</div>
<div class="t" style="top:402.53px;font-size:14px;font-weight:400;color:#666;right:188.00px;">$315</div>
<div class="t" style="top:402.53px;font-size:14px;font-weight:400;color:#666;right:40.50px;">$945</div>
<div class="b" style="left:1346.2px;top:421.57000000000005px;width:621.8px;height:24.30000000000001px;background:#F5F5F5;"></div>
<div class="t" style="top:426.59px;font-size:14.5px;font-weight:400;color:#666;left:1355.30px;">Dedicated</div>
<div class="t" style="top:427.02px;font-size:14px;font-weight:400;color:#666;right:335.50px;">4</div>
<div class="t" style="top:427.02px;font-size:14px;font-weight:400;color:#666;right:188.00px;">$640</div>
<div class="t" style="top:427.02px;font-size:14px;font-weight:400;color:#666;right:40.50px;">$2,560</div>
<div class="t" style="top:451.08px;font-size:14.5px;font-weight:400;color:#666;left:1355.30px;">Data</div>
<div class="t" style="top:451.51px;font-size:14px;font-weight:400;color:#666;right:335.50px;">2</div>
<div class="t" style="top:451.51px;font-size:14px;font-weight:400;color:#666;right:188.00px;">$225</div>
<div class="t" style="top:451.51px;font-size:14px;font-weight:400;color:#666;right:40.50px;">$450</div>
<div class="b" style="left:1346.2px;top:470.55px;width:621.8px;height:24.30000000000001px;background:#F5F5F5;"></div>
<div class="t" style="top:475.57px;font-size:14.5px;font-weight:400;color:#666;left:1355.30px;">Switches</div>
<div class="t" style="top:476.00px;font-size:14px;font-weight:400;color:#666;right:335.50px;">1</div>
<div class="t" style="top:476.00px;font-size:14px;font-weight:400;color:#666;right:188.00px;">$225</div>
<div class="t" style="top:476.00px;font-size:14px;font-weight:400;color:#666;right:40.50px;">$225</div>
<div class="t" style="top:500.06px;font-size:14.5px;font-weight:400;color:#666;left:1355.30px;">Sprinkler</div>
<div class="t" style="top:500.49px;font-size:14px;font-weight:400;color:#666;right:335.50px;">4</div>
<div class="t" style="top:500.49px;font-size:14px;font-weight:400;color:#666;right:188.00px;">$300</div>
<div class="t" style="top:500.49px;font-size:14px;font-weight:400;color:#666;right:40.50px;">$1,200</div>
<div class="b" style="left:1346.2px;top:519.53px;width:621.8px;height:24.299999999999955px;background:#F5F5F5;"></div>
<div class="t" style="top:524.55px;font-size:14.5px;font-weight:400;color:#666;left:1355.30px;">Core</div>
<div class="t" style="top:524.98px;font-size:14px;font-weight:400;color:#666;right:335.50px;">0</div>
<div class="t" style="top:524.98px;font-size:14px;font-weight:400;color:#666;right:188.00px;">$3,060</div>
<div class="t" style="top:524.98px;font-size:14px;font-weight:400;color:#666;right:40.50px;">$0</div>
<div class="t" style="top:549.04px;font-size:14.5px;font-weight:400;color:#666;left:1355.30px;">LS-HS</div>
<div class="t" style="top:549.47px;font-size:14px;font-weight:400;color:#666;right:335.50px;">1</div>
<div class="t" style="top:549.47px;font-size:14px;font-weight:400;color:#666;right:188.00px;">$850</div>
<div class="t" style="top:549.47px;font-size:14px;font-weight:400;color:#666;right:40.50px;">$850</div>
<div class="b" style="left:1346.2px;top:568.51px;width:621.8px;height:24.299999999999955px;background:#F5F5F5;"></div>
<div class="t" style="top:573.53px;font-size:14.5px;font-weight:400;color:#666;left:1355.30px;">HVAC Zone</div>
<div class="t" style="top:573.96px;font-size:14px;font-weight:400;color:#666;right:335.50px;">1</div>
<div class="t" style="top:573.96px;font-size:14px;font-weight:400;color:#666;right:188.00px;">$5,500</div>
<div class="t" style="top:573.96px;font-size:14px;font-weight:400;color:#666;right:40.50px;">$5,500</div>
<div class="b" style="left:1138px;top:610px;width:830px;height:447.5px;overflow:hidden;">
<div class="t" style="top:9.72px;left:10.60px;font-size:14.5px;font-weight:700;color:#333;letter-spacing:0.046px;">Item</div>
<div class="t" style="top:9.72px;right:109.00px;font-size:14.5px;font-weight:700;color:#333">Cost</div>
<div class="t" style="top:9.72px;right:15.50px;font-size:14.5px;font-weight:700;color:#333">Ext</div>
<div class="b" style="left:0px;top:31.5px;width:825.5px;height:1.7999999999999545px;background:#8F8F8F;"></div>
<div class="t" style="top:45.62px;left:10.30px;font-size:14.5px;font-weight:700;color:#666;">Flooring (800 USF)</div>
<div class="t" style="top:63.12px;left:10.30px;font-size:14.5px;font-weight:400;color:#666;">LVT material only allowance of $10.00 / square foot.</div>
<div class="t" style="top:53.72px;right:109.00px;font-size:14.5px;font-weight:700;color:#666">$10.22</div>
<div class="t" style="top:53.72px;right:15.50px;font-size:14.5px;font-weight:700;color:#666">$8,176</div>
<div class="b" style="left:0px;top:89.0px;width:825.5px;height:1.0px;background:#E6E6E6;"></div>
<div class="t" style="top:102.69px;left:10.30px;font-size:14.5px;font-weight:700;color:#666;">Walls (60 ft)</div>
<div class="t" style="top:120.19px;left:10.30px;font-size:14.5px;font-weight:400;color:#666;">VWC ($9/yard MOA) one wall, primer and 2 coats BM on other walls.</div>
<div class="t" style="top:110.79px;right:109.00px;font-size:14.5px;font-weight:700;color:#666">$165</div>
<div class="t" style="top:110.79px;right:15.50px;font-size:14.5px;font-weight:700;color:#666">$9,900</div>
<div class="b" style="left:0px;top:146.07000000000005px;width:825.5px;height:1.0px;background:#E6E6E6;"></div>
<div class="t" style="top:159.76px;left:10.30px;font-size:14.5px;font-weight:700;color:#666;">Lighting (8 ea)</div>
<div class="t" style="top:177.26px;left:10.30px;font-size:14.5px;font-weight:400;color:#666;">Furnish and install 3.5" downlights, Focal Point FLC3D / LC3, or equivalent.</div>
<div class="t" style="top:167.86px;right:109.00px;font-size:14.5px;font-weight:700;color:#666">$780</div>
<div class="t" style="top:167.86px;right:15.50px;font-size:14.5px;font-weight:700;color:#666">$6,240</div>
<div class="b" style="left:0px;top:203.14px;width:825.5px;height:1.0px;background:#E6E6E6;"></div>
<div class="t" style="top:216.83px;left:10.30px;font-size:14.5px;font-weight:700;color:#666;">Ceiling (800 USF)</div>
<div class="t" style="top:234.33px;left:10.30px;font-size:14.5px;font-weight:400;color:#666;">Painted drywall, 5/8" on metal studs, secured above.</div>
<div class="t" style="top:224.93px;right:109.00px;font-size:14.5px;font-weight:700;color:#666">$15.5</div>
<div class="t" style="top:224.93px;right:15.50px;font-size:14.5px;font-weight:700;color:#666">$12,400</div>
<div class="b" style="left:0px;top:260.21000000000004px;width:825.5px;height:1.0px;background:#E6E6E6;"></div>
<div class="t" style="top:273.90px;left:10.30px;font-size:14.5px;font-weight:700;color:#666;">Millwork (20 ea)</div>
<div class="t" style="top:291.40px;left:10.30px;font-size:14.5px;font-weight:400;color:#666;">(20) LF of b/u cabinets, solid surface counter and backsplash ($8.00 sf MOA).</div>
<div class="t" style="top:282.00px;right:109.00px;font-size:14.5px;font-weight:700;color:#666">$565</div>
<div class="t" style="top:282.00px;right:15.50px;font-size:14.5px;font-weight:700;color:#666">$11,300</div>
<div class="b" style="left:0px;top:317.28px;width:825.5px;height:1.0px;background:#E6E6E6;"></div>
<div class="t" style="top:330.97px;left:10.30px;font-size:14.5px;font-weight:700;color:#666;">Appliances (1 ea)</div>
<div class="t" style="top:348.47px;left:10.30px;font-size:14.5px;font-weight:400;color:#666;">Allowance of $11,000 for appliances and installation.</div>
<div class="t" style="top:339.07px;right:109.00px;font-size:14.5px;font-weight:700;color:#666">$11,000</div>
<div class="t" style="top:339.07px;right:15.50px;font-size:14.5px;font-weight:700;color:#666">$11,000</div>
<div class="b" style="left:0px;top:374.35px;width:825.5px;height:1.0px;background:#E6E6E6;"></div>
<div class="t" style="top:388.04px;left:10.30px;font-size:14.5px;font-weight:700;color:#666;">Pendant R3 (5200 ea)</div>
<div class="t" style="top:405.54px;left:10.30px;font-size:14.5px;font-weight:400;color:#666;">Allow $5200 for pendant or linear fixture(s) over break room table(s).</div>
<div class="t" style="top:396.14px;right:109.00px;font-size:14.5px;font-weight:700;color:#666">$1</div>
<div class="t" style="top:396.14px;right:15.50px;font-size:14.5px;font-weight:700;color:#666">$5,200</div>
<div class="b" style="left:0px;top:431.4200000000001px;width:825.5px;height:1.0px;background:#E6E6E6;"></div>
<div class="t" style="top:445.11px;left:10.30px;font-size:14.5px;font-weight:700;color:#666;">Plumbing (1 ea)</div>
<div class="b" style="left:825.5px;top:0px;width:4.2999999999999545px;height:446px;background:#EDEDED;border-radius:2px;"></div>
<div class="b" style="left:825.5px;top:0px;width:4.2999999999999545px;height:331.6px;background:#CDCDCD;border-radius:2px;"></div>
</div>
<div class="b" style="left:1138px;top:1057px;width:830px;height:1.5px;background:#D0D0D0;"></div>
<div class="t" style="top:1069.52px;font-size:14.5px;font-weight:700;color:#333;letter-spacing:-0.042px;right:121.04px;">Single room construction total</div>
<div class="t" style="top:1068.31px;font-size:17px;font-weight:400;color:#111;letter-spacing:-1.113px;left:1897.30px;">$107,701</div>
</body></html>
